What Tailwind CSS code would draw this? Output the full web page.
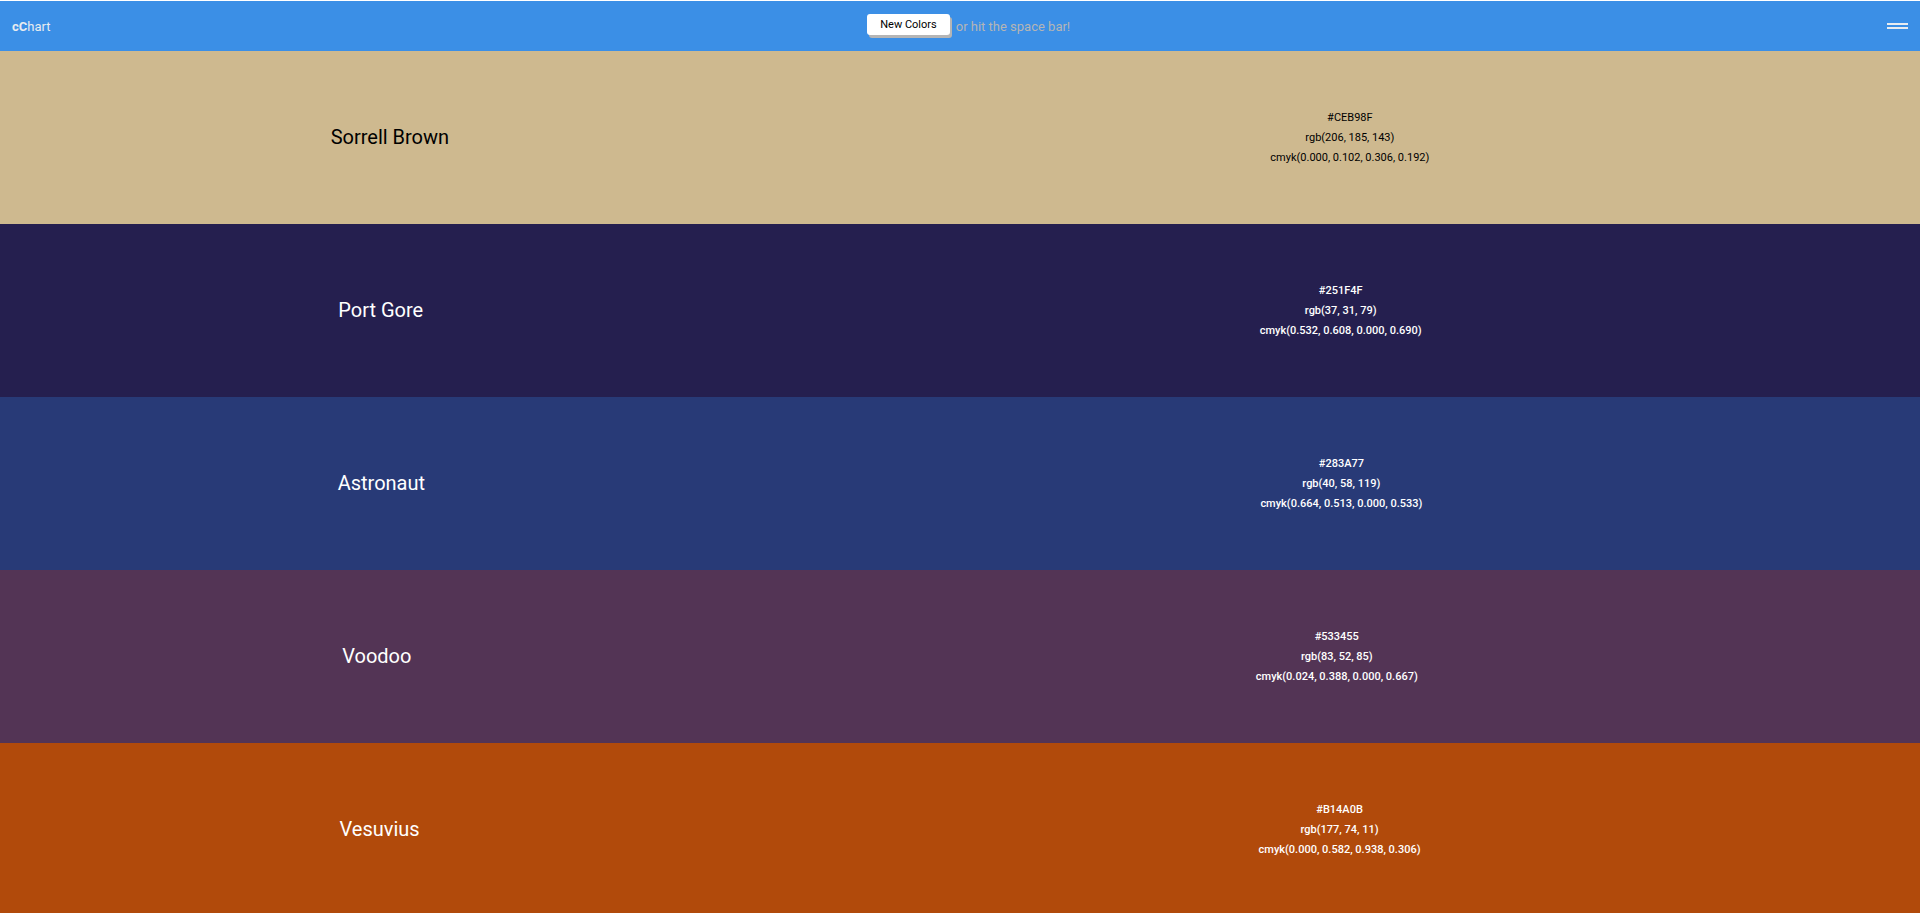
<!DOCTYPE html>
<html lang="en">
<head>
<meta charset="utf-8">
<title>cChart</title>
<script src="https://cdn.jsdelivr.net/npm/@tailwindcss/browser@4"></script>
</head>
<body class="flex h-screen flex-col overflow-hidden bg-white pt-px font-[Roboto,sans-serif]">
<header class="flex h-[50px] shrink-0 items-center justify-between bg-[#3b8fe6] px-3 text-[13px] text-[#e8ecf0]">
  <a href="#" class="pt-0.5"><b>cC</b>hart</a>
  <div class="flex items-center gap-1.5">
    <button class="mb-[3px] h-[21px] rounded-[3px] bg-white px-[13px] pt-0.5 text-[11px] text-black shadow-[2px_3px_0_#b5b5b5]">New Colors</button>
    <p class="pt-0.5 text-[#b5b5b5]">or hit the space bar!</p>
  </div>
  <button aria-label="Menu" class="flex w-[21px] flex-col gap-[2px]"><span class="h-[2px] w-full bg-[#e8ecf0]"></span><span class="h-[2px] w-full bg-[#e8ecf0]"></span></button>
</header>
<main class="flex flex-1 flex-col">
  <section class="min-h-[173px] flex-1 bg-[#CEB98F] text-black">
    <div class="mr-20 -ml-20 flex min-h-[173px] items-center justify-around pb-0.5">
      <h2 class="text-xl">Sorrell Brown</h2>
      <div class="pt-0.5 text-center text-[11px] leading-5"><p>#CEB98F</p><p>rgb(206, 185, 143)</p><p>cmyk(0.000, 0.102, 0.306, 0.192)</p></div>
    </div>
  </section>
  <section class="min-h-[173px] flex-1 bg-[#251F4F] text-white">
    <div class="mr-20 -ml-20 flex min-h-[173px] items-center justify-around pb-0.5">
      <h2 class="text-xl">Port Gore</h2>
      <div class="pt-0.5 text-center text-[11px] leading-5 font-medium"><p>#251F4F</p><p>rgb(37, 31, 79)</p><p>cmyk(0.532, 0.608, 0.000, 0.690)</p></div>
    </div>
  </section>
  <section class="min-h-[173px] flex-1 bg-[#283A77] text-white">
    <div class="mr-20 -ml-20 flex min-h-[173px] items-center justify-around pb-0.5">
      <h2 class="text-xl">Astronaut</h2>
      <div class="pt-0.5 text-center text-[11px] leading-5 font-medium"><p>#283A77</p><p>rgb(40, 58, 119)</p><p>cmyk(0.664, 0.513, 0.000, 0.533)</p></div>
    </div>
  </section>
  <section class="min-h-[173px] flex-1 bg-[#533455] text-white">
    <div class="mr-20 -ml-20 flex min-h-[173px] items-center justify-around pb-0.5">
      <h2 class="text-xl">Voodoo</h2>
      <div class="pt-0.5 text-center text-[11px] leading-5 font-medium"><p>#533455</p><p>rgb(83, 52, 85)</p><p>cmyk(0.024, 0.388, 0.000, 0.667)</p></div>
    </div>
  </section>
  <section class="min-h-[173px] flex-1 bg-[#B14A0B] text-white">
    <div class="mr-20 -ml-20 flex min-h-[173px] items-center justify-around pb-0.5">
      <h2 class="text-xl">Vesuvius</h2>
      <div class="pt-0.5 text-center text-[11px] leading-5 font-medium"><p>#B14A0B</p><p>rgb(177, 74, 11)</p><p>cmyk(0.000, 0.582, 0.938, 0.306)</p></div>
    </div>
  </section>
</main>
</body>
</html>
